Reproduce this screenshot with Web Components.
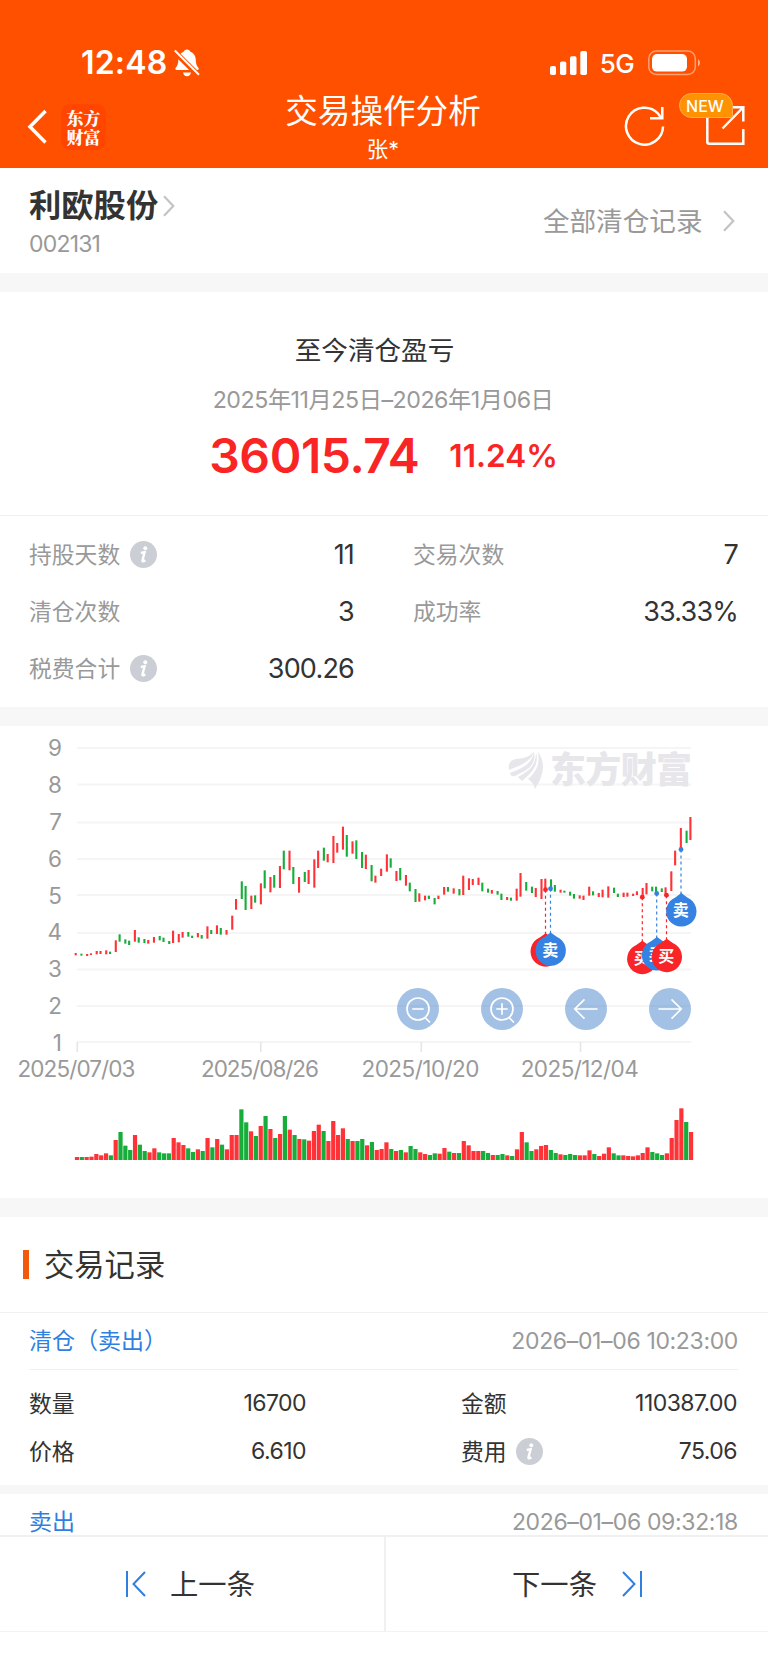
<!DOCTYPE html>
<html lang="zh-CN">
<head>
<meta charset="UTF-8">
<title>交易操作分析</title>
<style>
    body {
        margin: 0;
        background: #fff;
        color: #333;
        font-family: Inter, "Noto Sans CJK SC", sans-serif;
    }
</style>
</head>
<body>
<trade-page></trade-page>

<script>
// Creates a template from a string
function createTemplate(html) {
    const template = document.createElement("template");
    template.innerHTML = html;
    return template;
}

// Every element of the page clones its own template
class BaseElement extends HTMLElement {
    constructor() {
        super();
        this.root = this.attachShadow({ mode: "open" });
        this.root.appendChild(this.constructor.template.content.cloneNode(true));
    }
}

class StatusBar extends BaseElement {
    static template = createTemplate(`
        <style>
        :host {
            display: flex;
            justify-content: space-between;
            align-items: center;
            box-sizing: border-box;
            height: 32px;
            padding: 0 67px 0 81px;
            color: #fff;
        }

        .left, .right {
            display: flex;
            align-items: center;
        }

        .time {
            font-size: 32px;
            font-weight: 600;
            line-height: 32px;
            letter-spacing: 0.2px;
            margin-right: 7px;
        }

        .network {
            font-size: 26px;
            font-weight: 500;
            line-height: 32px;
            letter-spacing: -0.6px;
            margin: 1px 14px 0 11.500px;
        }

        svg {
            display: block;
        }
        </style>
        <div class="left">
            <span class="time">12:48</span>
            <svg width="26" height="28" viewBox="0 0 26 28" fill="#fff">
                <path d="M13 .5c1.8 0 3 1 3.4 2.3 3.600 1.300 5.300 4.300 5.400 8.200.1 4 .8 5.500 2.600 7.700.7.9.3 2.300-1 2.300H2.700c-1.400 0-1.800-1.400-1-2.300 1.800-2.200 2.500-3.700 2.600-7.700.1-3.900 1.700-6.900 5.300-8.200C10 1.500 11.200.5 13 .5z"/>
                <path d="M9 23.500h8c-.4 2.200-2 3.700-4 3.700s-3.600-1.500-4-3.700z"/>
                <path d="M-1 1 26 28" stroke="#ff5000" stroke-width="5.500"/>
                <path d="M.8 1.500 25 25.700" stroke="#fff" stroke-width="2"/>
            </svg>
        </div>
        <div class="right">
            <svg width="38" height="24" viewBox="0 0 38 24" fill="#fff">
                <rect x="0" y="15" width="6" height="9" rx="1.700"/>
                <rect x="10" y="10.500" width="6.300" height="13.500" rx="1.700"/>
                <rect x="20" y="5.200" width="6.500" height="18.800" rx="1.700"/>
                <rect x="30.300" y="0" width="6.700" height="24" rx="1.700"/>
            </svg>
            <span class="network">5G</span>
            <svg width="53" height="26" viewBox="0 0 53 26">
                <rect x=".8" y="1" width="46.500" height="23.500" rx="7.500" fill="none" stroke="#fff" stroke-opacity=".45" stroke-width="1.500"/>
                <rect x="4" y="4" width="35" height="17.600" rx="5" fill="#fff"/>
                <path d="M50 9.200c2.600 1.200 2.600 6 0 7.200z" fill="#fff" fill-opacity=".55"/>
            </svg>
        </div>
    `);
}

class NavHeader extends BaseElement {
    static template = createTemplate(`
        <style>
        :host {
            display: grid;
            grid-template-columns: 199px 1fr 201px;
            height: 85px;
            color: #fff;
        }

        .left {
            display: flex;
            align-items: flex-start;
            padding: 21px 0 0 27px;
        }

        .back {
            margin: 5px 14px 0 0;
        }

        .logo {
            width: 45px;
            height: 46px;
            box-sizing: border-box;
            padding-top: 4px;
            border-radius: 9px;
            background: #ff4500;
            font: 900 17px/19px "Noto Serif CJK SC", "Noto Sans CJK SC", sans-serif;
            text-align: center;
        }

        .title {
            text-align: center;
        }

        h1 {
            margin: 5px 0 0 0;
            font-size: 32.600px;
            font-weight: 400;
            line-height: 46px;
        }

        .user {
            font-size: 21.500px;
            line-height: 30px;
        }

        .right {
            display: flex;
            justify-content: flex-end;
            gap: 39.500px;
            padding: 22px 22.500px 0 0;
        }

        .share {
            position: relative;
        }

        /* The badge lies over the share icon */
        .badge {
            position: absolute;
            left: -25.500px;
            top: -12.500px;
            width: 54px;
            height: 25px;
            box-sizing: border-box;
            border: 1px solid #ffad52;
            border-radius: 13px 13px 2px 13px;
            background: #ff9200;
            font-size: 16px;
            font-weight: 500;
            line-height: 24px;
            text-indent: -2px;
            text-align: center;
        }

        svg {
            display: block;
        }
        </style>
        <div class="left">
            <svg class="back" width="20" height="36" viewBox="0 0 20 36" fill="none" stroke="#fff" stroke-width="3.500">
                <path d="M18.500 2 3 17.800 18.500 33.600"/>
            </svg>
            <div class="logo">东方<br>财富</div>
        </div>
        <div class="title">
            <h1>交易操作分析</h1>
            <div class="user">张*</div>
        </div>
        <div class="right">
            <svg width="41" height="41" viewBox="0 0 41 41" fill="none" stroke="#fff" stroke-width="2.500">
                <path d="M39 21.500A18.500 18.500 0 1 1 34 8.500L37 12.500"/>
                <path d="M38.300 2V13.200H26"/>
            </svg>
            <div class="share">
                <svg width="41" height="41" viewBox="0 0 41 41" fill="none" stroke="#fff" stroke-width="2.500">
                    <path d="M2.300 8V36.800Q2.300 38.800 4.300 38.800H38.300V24M26 2.200H38.300V16.500M38 2.500 17.500 23.500"/>
                </svg>
                <span class="badge">NEW</span>
            </div>
        </div>
    `);
}

class ChevronIcon extends BaseElement {
    static template = createTemplate(`
        <style>
        :host {
            display: block;
        }

        svg {
            display: block;
        }
        </style>
        <svg width="12" height="22" viewBox="0 0 12 22" fill="none" stroke="#c3c3c3" stroke-width="2.200">
            <path d="M1 1.300 10.300 11 1 20.700"/>
        </svg>
    `);
}

class InfoIcon extends BaseElement {
    static template = createTemplate(`
        <style>
        :host {
            display: block;
        }

        svg {
            display: block;
        }
        </style>
        <svg width="27" height="27" viewBox="0 0 27 27">
            <circle cx="13.500" cy="13.500" r="13.500" fill="#cbced4"/>
            <circle cx="15.300" cy="7.300" r="2" fill="#fff"/>
            <path d="M10.800 12 14.600 11.200 12.500 19.300Q12.200 21.500 15.300 19.200" fill="none" stroke="#fff" stroke-width="2.400"/>
        </svg>
    `);
}

class StockBar extends BaseElement {
    static template = createTemplate(`
        <style>
        :host {
            display: flex;
            justify-content: space-between;
            align-items: center;
            box-sizing: border-box;
            height: 105px;
            padding: 0 33px 0 29px;
        }

        .name {
            display: flex;
            align-items: center;
            gap: 5px;
            font-size: 32.300px;
            font-weight: 600;
            line-height: 40px;
            padding-top: 5px;
        }

        .code {
            font-size: 23px;
            line-height: 32px;
            letter-spacing: -0.8px;
            color: #999;
            padding-top: 2px;
        }

        .all {
            display: flex;
            align-items: center;
            gap: 20.500px;
            font-size: 26.600px;
            line-height: 40px;
            color: #999;
        }
        </style>
        <div>
            <div class="name"><slot name="name"></slot><chevron-icon></chevron-icon></div>
            <div class="code"><slot name="code"></slot></div>
        </div>
        <div class="all">全部清仓记录<chevron-icon></chevron-icon></div>
    `);
}

class ProfitSummary extends BaseElement {
    static template = createTemplate(`
        <style>
        :host {
            display: block;
            box-sizing: border-box;
            height: 224px;
            padding-top: 38px;
            border-bottom: 1px solid #f0f0f0;
            text-align: center;
        }

        .title {
            padding-right: 19px;
            font-size: 26.600px;
            line-height: 40px;
        }

        .period {
            font-size: 23.200px;
            line-height: 40px;
            letter-spacing: -0.45px;
            color: #999;
            padding: 10px 2px 0 0;
        }

        .result {
            display: flex;
            justify-content: center;
            align-items: center;
            gap: 30px;
            height: 64px;
            padding: 3px 1px 0 0;
            color: #f92525;
            font-weight: 600;
        }

        .amount {
            font-size: 48px;
            letter-spacing: -0.4px;
        }

        .percent {
            font-size: 31.500px;
        }
        </style>
        <div class="title">至今清仓盈亏</div>
        <div class="period"><slot name="period"></slot></div>
        <div class="result">
            <span class="amount"><slot name="amount"></slot></span>
            <span class="percent"><slot name="percent"></slot></span>
        </div>
    `);
}

// Label on the left, value on the right
class StatItem extends BaseElement {
    static template = createTemplate(`
        <style>
        :host {
            display: flex;
            align-items: center;
            font-size: 22.800px;
            color: #999;
        }

        :host(.dark) {
            color: #333;
        }

        .label {
            padding-bottom: 3px;
        }

        info-icon {
            display: none;
            margin: 0 0 1px 9.500px;
        }

        :host([info]) info-icon {
            display: block;
        }

        .value {
            margin-left: auto;
            padding-bottom: 1px;
            color: #333;
            font-size: var(--value-size, 27px);
            letter-spacing: var(--value-spacing, -0.8px);
        }
        </style>
        <span class="label"><slot name="label"></slot></span>
        <info-icon></info-icon>
        <span class="value"><slot></slot></span>
    `);
}

class StatGrid extends BaseElement {
    static template = createTemplate(`
        <style>
        :host {
            display: grid;
            grid-template-columns: 325px 325px;
            grid-auto-rows: 57.400px;
            column-gap: 59px;
            box-sizing: border-box;
            height: 191px;
            padding: 10px 0 0 29px;
        }
        </style>
        <slot></slot>
    `);
}

class PageGap extends BaseElement {
    static template = createTemplate(`
        <style>
        :host {
            display: block;
            height: 19px;
            background: #f7f7f7;
        }

        :host([small]) {
            height: 9px;
        }
        </style>
    `);
}

// One bar per day: colour, high, low, volume (heights in thirds of a pixel)
const BARS = `
r684,691,9 g686,692,9 r687,693,9 r685,690,10 r678,688,18 r678,687,14 r676,688,20 g680,687,14
r646,681,60 g628,650,84 g643,656,43 g647,660,30 r615,650,75 g637,653,46 g642,654,27 r645,656,23
r636,653,35 g633,646,23 g638,651,20 g648,657,20 r617,654,66 r627,652,53 r621,638,45 g621,635,35
g632,639,24 r624,637,32 g630,641,27 r604,641,66 g615,627,38 r601,627,63 g609,629,46 r615,629,32
r572,614,75 r522,554,75 g469,522,152 g483,555,113 r512,552,86 g511,533,72 r475,538,102 g436,490,132
r456,502,93 g450,488,66 r423,489,78 g377,433,132 r377,436,91 g426,477,75 r456,503,63 g441,471,62
r435,477,58 r403,488,87 r377,429,106 g368,407,87 r387,412,57 r333,414,117 r354,383,75 r305,374,95
g330,395,63 r349,386,57 g346,402,57 g381,429,63 r389,432,44 g420,469,54 r452,473,30 r431,453,33
r388,440,53 g400,428,33 r438,468,27 g429,466,30 r450,482,23 g473,499,42 g492,531,33 r505,530,23
r512,526,18 g512,522,15 g519,538,20 r512,522,19 r486,509,36 g486,500,25 r490,506,21 g492,511,21
r452,510,57 r460,495,44 r462,480,27 r458,480,27 g473,499,27 g491,503,21 r495,506,15 g498,509,15
g506,525,18 r516,525,14 g518,527,12 r491,527,32 r444,515,84 g471,497,53 g485,504,27 r489,516,32
r462,522,42 r461,495,45 g463,498,30 g480,500,21 r494,503,17 g497,503,15 g500,512,18 g507,521,15
r511,521,14 r512,525,14 r485,512,29 g499,511,18 r504,516,12 r494,517,19 r484,518,38 g488,504,20
g506,516,14 r503,516,14 r503,515,12 r506,513,11 r499,510,14 r489,520,21 r474,508,38 g485,499,24
g485,503,20 g490,501,15 r487,512,20 r439,498,66 r377,421,120 r309,372,155 g317,354,114 r276,345,84
`.trim().split(/\s+/);

// Buys and sells: dot position, pin position
const MARKS = [
    { type: "买", x: 545.5, y: 889.7, px: 545.7, py: 950.5 },
    { type: "卖", x: 550.5, y: 888.7, px: 550.7, py: 949.7 },
    { type: "买", x: 642.3, y: 897.2, px: 642.3, py: 958 },
    { type: "卖", x: 656.7, y: 893.5, px: 657, py: 954.3 },
    { type: "买", x: 666.5, y: 895.2, px: 666.8, py: 956 },
    { type: "卖", x: 681, y: 849.5, px: 681.3, py: 910.4 }
];

class TradeChart extends BaseElement {
    static template = createTemplate(`
        <style>
        :host {
            display: block;
            position: relative;
            height: 472px;
        }

        svg {
            display: block;
        }

        text {
            font-family: Inter, "Noto Sans CJK SC", sans-serif;
        }

        .axis text {
            font-size: 22.500px;
            fill: #999;
        }

        .watermark text {
            font-size: 36px;
            font-weight: 900;
        }

        .pin {
            font-size: 16px;
            font-weight: 700;
            fill: #fff;
            text-anchor: middle;
        }

        /* The buttons float over the plot */
        .tools {
            position: absolute;
            right: 77.500px;
            top: 261.500px;
            display: flex;
            gap: 42px;
        }

        .tools button {
            width: 42px;
            height: 42px;
            padding: 0;
            border: none;
            border-radius: 50%;
            background: rgba(71, 131, 202, 0.5);
        }
        </style>
        <svg class="plot" width="768" height="472" viewBox="0 726 768 472">
            <g class="axis"></g>
            <g class="watermark" fill="#e6e6eb">
                <path d="M509 770C508 762 511 760 517 759C526 758 531 756 534 751C532 761 521 765 509 770Z"/>
                <path d="M510 773C524 768 532 763 534 752C536 764 530 769 515 776Q511 777 510 773Z"/>
                <path d="M518 777C531 770 536 764 536 752C539 764 534 771 522 781Z"/>
                <path d="M538 752C545 761 545 774 535 789C534 784 531 781 528 779C537 771 540 764 538 752Z"/>
                <text x="550" y="783" textLength="142">东方财富</text>
            </g>
            <g class="candles"></g>
            <g class="volumes"></g>
            <g class="marks"></g>
        </svg>
        <div class="tools">
            <button>
                <svg width="42" height="42" viewBox="0 0 42 42" fill="none" stroke="#fff" stroke-width="1.700">
                    <circle cx="21" cy="21" r="11"/>
                    <path d="M15.300 21h11.400M28 29.500 33 34.500"/>
                </svg>
            </button>
            <button>
                <svg width="42" height="42" viewBox="0 0 42 42" fill="none" stroke="#fff" stroke-width="1.700">
                    <circle cx="21" cy="21" r="11"/>
                    <path d="M15.300 21h11.400M21 15.300v11.400M28 29.500 33 34.500"/>
                </svg>
            </button>
            <button>
                <svg width="42" height="42" viewBox="0 0 42 42" fill="none" stroke="#fff" stroke-width="1.700">
                    <path d="M32.500 21H10M19.500 11.300 9.800 21l9.700 9.700"/>
                </svg>
            </button>
            <button>
                <svg width="42" height="42" viewBox="0 0 42 42" fill="none" stroke="#fff" stroke-width="1.700">
                    <path d="M9.500 21H32M22.500 11.300 32.200 21l-9.700 9.700"/>
                </svg>
            </button>
        </div>
    `);

    connectedCallback() {
        this.drawAxis();
        this.drawBars();
        this.drawMarks();
    }

    drawAxis() {
        const lines = [748, 784.5, 822.5, 859, 895, 933, 969.5, 1006, 1042];
        const dates = [[76.5, "2025/07/03"], [260, "2025/08/26"], [420.5, "2025/10/20"], [579.7, "2025/12/04"]];
        let html = "";

        lines.forEach((y, i) => {
            html += `<path d="M77 ${y}H691" stroke="#f5f5f6" stroke-width="1.8"/>`;
            html += `<text x="62" y="${756.3 + i * 36.8}" text-anchor="end">${9 - i}</text>`;
        });

        dates.forEach(([x, date]) => {
            html += `<path d="M${x + 0.8} 1042v10" stroke="#e4e5e8" stroke-width="1.6"/>`;
            html += `<text x="${x}" y="1077" text-anchor="middle" textLength="118">${date}</text>`;
        });

        this.root.querySelector(".axis").innerHTML = html;
    }

    drawBars() {
        let candles = "";
        let volumes = "";

        BARS.forEach((bar, i) => {
            const color = bar[0] === "r" ? "#ff3237" : "#16ad3a";
            const [high, low, volume] = bar.slice(1).split(",").map(Number);

            // Candles stand on whole columns, volumes are spread evenly
            const x = 75.7 + Math.ceil(i * 2.532) * 1.909;
            candles += `<rect x="${x - 1.05}" y="${725 + high / 3}" width="2.1" height="${(low - high) / 3}" fill="${color}"/>`;

            const height = volume / 3;
            volumes += `<rect x="${77 + i * 4.835 - 2.1}" y="${1160 - height}" width="4.2" height="${height}" fill="${color}"/>`;
        });

        this.root.querySelector(".candles").innerHTML = candles;
        this.root.querySelector(".volumes").innerHTML = volumes;
    }

    drawMarks() {
        let html = "";

        MARKS.forEach(({ type, x, y, py }) => {
            const color = type === "买" ? "#f92427" : "#3582e2";
            html += `<path d="M${x} ${y}V${py - 16}" stroke="${color}" stroke-width="1.2" stroke-dasharray="3 3"/>`;
            html += `<circle cx="${x}" cy="${y}" r="2.4" fill="${color}"/>`;
        });

        MARKS.forEach(({ type, px, py }) => {
            const color = type === "买" ? "#f92427" : "#3582e2";
            html += `<path d="M${px} ${py - 17.3}l6 4.3A15.2 15.2 0 1 1 ${px - 6} ${py - 13}z" fill="${color}"/>`;
            html += `<text class="pin" x="${px - 0.5}" y="${py + 6}">${type}</text>`;
        });

        this.root.querySelector(".marks").innerHTML = html;
    }
}

class SectionTitle extends BaseElement {
    static template = createTemplate(`
        <style>
        :host {
            display: flex;
            align-items: center;
            gap: 15px;
            box-sizing: border-box;
            height: 96px;
            padding-left: 23px;
            border-bottom: 1px solid #f0f0f0;
            font-size: 30.300px;
        }

        .mark {
            width: 6px;
            height: 29px;
            background: #f05a0a;
        }

        .text {
            padding-bottom: 4px;
        }
        </style>
        <div class="mark"></div>
        <span class="text"><slot></slot></span>
    `);
}

class TradeRecord extends BaseElement {
    static template = createTemplate(`
        <style>
        :host {
            display: block;
            padding: 0 30px 0 29px;
        }

        .head {
            display: flex;
            justify-content: space-between;
            align-items: center;
            height: 56px;
            border-bottom: 1px solid #f0f0f0;
            font-size: 23px;
            color: #2f7fe0;
        }

        .type {
            padding-bottom: 4px;
        }

        .time {
            letter-spacing: -0.35px;
            color: #999;
        }

        .body {
            display: grid;
            grid-template-columns: 277px 276px;
            grid-auto-rows: 48px;
            column-gap: 155px;
            height: 105px;
            padding-top: 9.500px;
            box-sizing: content-box;
            margin-bottom: 0.500px;
            --value-size: 23px;
            --value-spacing: -0.55px;
        }
        </style>
        <div class="head">
            <span class="type"><slot name="type"></slot></span>
            <span class="time"><slot name="time"></slot></span>
        </div>
        <div class="body"><slot></slot></div>
    `);
}

class RecordPager extends BaseElement {
    static template = createTemplate(`
        <style>
        :host {
            display: grid;
            grid-template-columns: 386px 1fr;
            box-sizing: border-box;
            height: 97px;
            border-top: 2px solid #f0f0f1;
            border-bottom: 1px solid #f3f3f3;
            font-size: 28.300px;
        }

        .item {
            display: flex;
            justify-content: center;
            align-items: center;
            gap: 24px;
        }

        .item:first-of-type {
            border-right: 2px solid #f0f0f1;
            padding-right: 3px;
        }

        .item:last-of-type {
            gap: 25px;
        }

        .text {
            padding-bottom: 3px;
        }

        svg {
            display: block;
        }
        </style>
        <div class="item">
            <svg width="20" height="28" viewBox="0 0 20 28" fill="none" stroke="#2f7fe0" stroke-width="2">
                <path d="M1 1v26M19 2 7.500 14 19 26"/>
            </svg>
            <span class="text">上一条</span>
        </div>
        <div class="item">
            <span class="text">下一条</span>
            <svg width="20" height="28" viewBox="0 0 20 28" fill="none" stroke="#2f7fe0" stroke-width="2">
                <path d="M19 1v26M1 2 12.500 14 1 26"/>
            </svg>
        </div>
    `);
}

class TradePage extends BaseElement {
    static template = createTemplate(`
        <style>
        :host {
            display: flex;
            flex-direction: column;
            width: 768px;
            height: 1670px;
            overflow: hidden;
        }

        header {
            flex: none;
            height: 168px;
            box-sizing: border-box;
            padding-top: 47px;
            background: #ff5000;
        }

        nav-header {
            margin-top: 4px;
        }

        /* The list goes on below the pager */
        main {
            flex: none;
            height: 1367px;
            overflow: hidden;
        }
        </style>
        <header>
            <status-bar></status-bar>
            <nav-header></nav-header>
        </header>
        <main>
            <stock-bar>
                <span slot="name">利欧股份</span>
                <span slot="code">002131</span>
            </stock-bar>
            <page-gap></page-gap>
            <profit-summary>
                <span slot="period">2025年11月25日–2026年1月06日</span>
                <span slot="amount">36015.74</span>
                <span slot="percent">11.24%</span>
            </profit-summary>
            <stat-grid>
                <stat-item info><span slot="label">持股天数</span>11</stat-item>
                <stat-item><span slot="label">交易次数</span>7</stat-item>
                <stat-item><span slot="label">清仓次数</span>3</stat-item>
                <stat-item><span slot="label">成功率</span>33.33%</stat-item>
                <stat-item info><span slot="label">税费合计</span>300.26</stat-item>
            </stat-grid>
            <page-gap></page-gap>
            <trade-chart></trade-chart>
            <page-gap></page-gap>
            <section-title>交易记录</section-title>
            <trade-record>
                <span slot="type">清仓（卖出）</span>
                <span slot="time">2026–01–06 10:23:00</span>
                <stat-item class="dark"><span slot="label">数量</span>16700</stat-item>
                <stat-item class="dark"><span slot="label">金额</span>110387.00</stat-item>
                <stat-item class="dark"><span slot="label">价格</span>6.610</stat-item>
                <stat-item class="dark" info><span slot="label">费用</span>75.06</stat-item>
            </trade-record>
            <page-gap small></page-gap>
            <trade-record>
                <span slot="type">卖出</span>
                <span slot="time">2026–01–06 09:32:18</span>
            </trade-record>
        </main>
        <record-pager></record-pager>
    `);
}

customElements.define("chevron-icon", ChevronIcon);
customElements.define("info-icon", InfoIcon);
customElements.define("status-bar", StatusBar);
customElements.define("nav-header", NavHeader);
customElements.define("stock-bar", StockBar);
customElements.define("profit-summary", ProfitSummary);
customElements.define("stat-item", StatItem);
customElements.define("stat-grid", StatGrid);
customElements.define("page-gap", PageGap);
customElements.define("trade-chart", TradeChart);
customElements.define("section-title", SectionTitle);
customElements.define("trade-record", TradeRecord);
customElements.define("record-pager", RecordPager);
customElements.define("trade-page", TradePage);
</script>
</body>
</html>
